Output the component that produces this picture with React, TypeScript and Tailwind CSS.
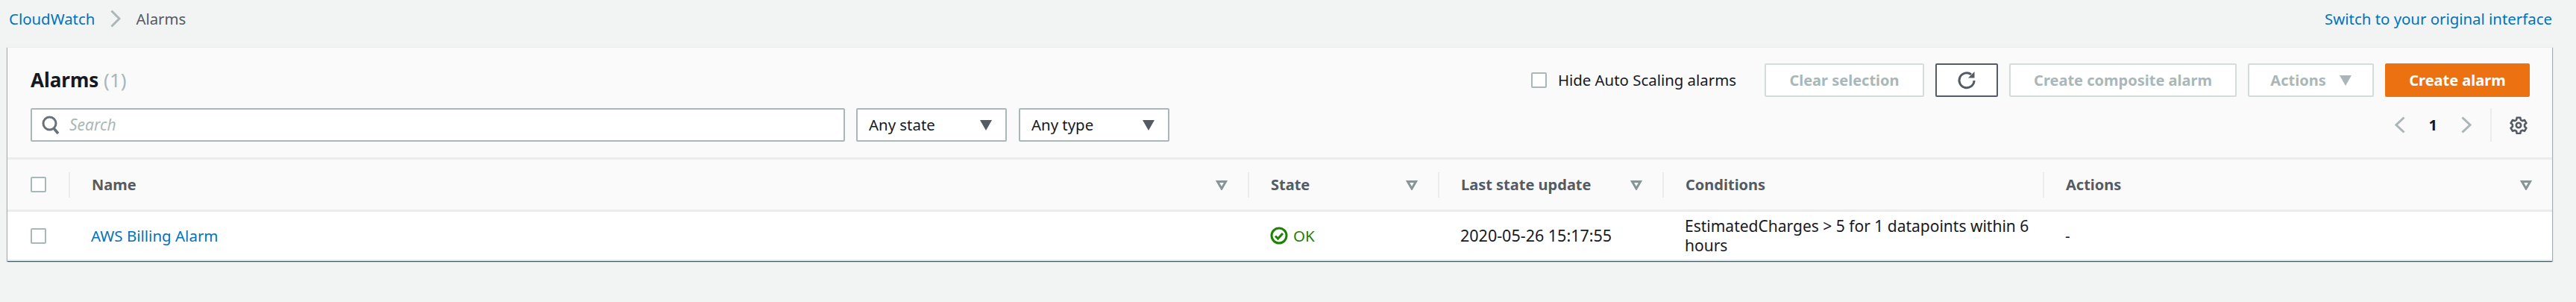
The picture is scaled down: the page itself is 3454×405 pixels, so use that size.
const font = "font-['Noto_Sans',sans-serif]"

function Checkbox() {
  return <div className="h-[21px] w-[21px] shrink-0 rounded-[2px] border-2 border-[#aab7b8] bg-white" />
}

function SortIcon() {
  return (
    <svg width="16" height="14" viewBox="0 0 16 14" className="shrink-0">
      <path d="M2.5 2.5H13.5L8 12Z" fill="none" stroke="#879596" strokeWidth="3" strokeLinejoin="miter" />
    </svg>
  )
}

function CaretDown({ color }: { color: string }) {
  return (
    <svg width="16" height="14" viewBox="0 0 16 14" className="shrink-0">
      <path d="M0 0H16L8 14Z" fill={color} />
    </svg>
  )
}

function Chevron({ left, className }: { left?: boolean; className?: string }) {
  return (
    <svg width="14" height="23" viewBox="0 0 14 23" className={className}>
      <path d={left ? "M12.5 1.5L2 11.5L12.5 21.5" : "M1.5 1.5L12 11.5L1.5 21.5"} fill="none" stroke="#aab7b8" strokeWidth="3" />
    </svg>
  )
}

function FilterSelect({ label }: { label: string }) {
  return (
    <div className="flex h-[45px] w-[202px] items-center justify-between rounded-[2px] border-2 border-[#aab7b8] bg-white pl-[15px] pr-[18px] text-[20.4px] text-[#16191f]">
      <span>{label}</span>
      <CaretDown color="#545b64" />
    </div>
  )
}

function DisabledButton({ children, width }: { children: React.ReactNode; width: string }) {
  return (
    <div className={`flex h-[45px] ${width} items-center justify-center rounded-[2px] border-2 border-[#d5dbdb] bg-white text-[20px] font-bold text-[#aab7b8]`}>
      {children}
    </div>
  )
}

function HeaderCell({ label, width, sort = true }: { label: string; width: string; sort?: boolean }) {
  return (
    <div className={`flex h-[34px] ${width} items-center justify-between border-l-2 border-[#eaeded] pl-[29px] pr-[27px]`}>
      <span className="text-[20px] font-bold text-[#545b64]">{label}</span>
      {sort && <SortIcon />}
    </div>
  )
}

export default function App() {
  return (
    <div className={`h-[405px] w-[3454px] overflow-hidden bg-[#f2f3f3] ${font}`}>
      <div className="flex h-[63px] items-center justify-between pb-[13px] pl-[12px] pr-[32px] text-[20.4px]">
        <div className="flex items-center">
          <span className="text-[#0073bb]">CloudWatch</span>
          <svg width="14" height="24" viewBox="0 0 14 24" className="ml-[21px] mr-[20px]">
            <path d="M1.5 1.5L12 12L1.5 22.5" fill="none" stroke="#aab7b8" strokeWidth="3" />
          </svg>
          <span className="text-[#545b64]">Alarms</span>
        </div>
        <span className="text-[#0073bb]">Switch to your original interface</span>
      </div>

      <div className="ml-[10px] w-[3412px] border-t border-[#eaeded] bg-white shadow-[0_1px_1px_0_rgba(0,28,36,0.5),1px_1px_1px_0_rgba(0,28,36,0.25),-1px_1px_1px_0_rgba(0,28,36,0.25)]">
        <div className="border-b-[3px] border-[#eaeded] bg-[#fafafa] pb-[21px] pl-[31px] pr-[30px] pt-[21px]">
          <div className="flex h-[45px] items-center">
            <h1 className="text-[26px] font-bold text-[#16191f]">
              Alarms <span className="font-normal text-[#aab7b8]">(1)</span>
            </h1>
            <label className="ml-auto flex items-center gap-[15px] text-[20.4px] text-[#16191f]">
              <Checkbox />
              Hide Auto Scaling alarms
            </label>
            <div className="ml-[38px] flex gap-[15px]">
              <DisabledButton width="w-[214px]">Clear selection</DisabledButton>
              <div className="flex h-[45px] w-[84px] items-center justify-center rounded-[2px] border-2 border-[#545b64] bg-white">
                <svg width="26" height="26" viewBox="0 0 26 26">
                  <path d="M19 4.8A10 10 0 1 0 23 13" fill="none" stroke="#545b64" strokeWidth="3" />
                  <path d="M23.5 1V9.5H15Z" fill="#545b64" />
                </svg>
              </div>
              <DisabledButton width="w-[305px]">Create composite alarm</DisabledButton>
              <DisabledButton width="w-[169px]">
                <span className="mr-[18px]">Actions</span>
                <CaretDown color="#aab7b8" />
              </DisabledButton>
              <div className="flex h-[45px] w-[194px] items-center justify-center rounded-[2px] bg-[#ec7211] text-[20px] font-bold text-white">
                Create alarm
              </div>
            </div>
          </div>

          <div className="mt-[15px] flex h-[45px] items-center">
            <div className="flex h-[45px] w-[1092px] items-center rounded-[2px] border-2 border-[#aab7b8] bg-white pl-[13px]">
              <svg width="24" height="26" viewBox="0 0 24 26">
                <circle cx="10.5" cy="10.5" r="8.5" fill="none" stroke="#687078" strokeWidth="3" />
                <path d="M16 17L22 24" stroke="#687078" strokeWidth="3.5" />
              </svg>
              <span className="ml-[13px] text-[21px] italic text-[#aab7b8]">Search</span>
            </div>
            <div className="ml-[15px] flex gap-[16px]">
              <FilterSelect label="Any state" />
              <FilterSelect label="Any type" />
            </div>
            <div className="ml-auto flex h-[45px] items-center">
              <Chevron left />
              <span className="ml-[32px] mr-[32px] text-[20px] font-bold text-[#16191f]">1</span>
              <Chevron />
              <div className="ml-[25px] h-[45px] w-[2px] bg-[#eaeded]" />
              <svg width="24" height="24" viewBox="0 0 24 24" className="ml-[24px] mr-[3px]" fill="none" stroke="#545b64" strokeWidth="2.6" strokeLinejoin="round">
                <path d="M9.7 1.8h4.6l.6 3 2.3 1.3 2.9-1 2.3 4-2.3 2v2.6l2.3 2-2.3 4-2.9-1-2.3 1.3-.6 3H9.7l-.6-3-2.3-1.3-2.9 1-2.3-4 2.3-2v-2.6l-2.3-2 2.3-4 2.9 1 2.3-1.3z" />
                <circle cx="12" cy="12" r="3.2" />
              </svg>
            </div>
          </div>
        </div>

        <div className="flex h-[70px] items-center border-b-[3px] border-[#eaeded] bg-[#fafafa]">
          <div className="flex w-[82px] shrink-0 pl-[31px]">
            <Checkbox />
          </div>
          <HeaderCell label="Name" width="w-[1581px]" />
          <HeaderCell label="State" width="w-[255px]" />
          <HeaderCell label="Last state update" width="w-[301px]" />
          <HeaderCell label="Conditions" width="w-[510px]" sort={false} />
          <HeaderCell label="Actions" width="w-[683px]" />
        </div>

        <div className="flex h-[66px] items-center border-b-2 border-[#eaeded] text-[20.5px] text-[#16191f]">
          <div className="flex w-[82px] shrink-0 pl-[31px]">
            <Checkbox />
          </div>
          <div className="w-[1581px] pl-[30px] text-[#0073bb]">AWS Billing Alarm</div>
          <div className="flex w-[255px] items-center gap-[7px] pl-[30px] text-[#1d8102]">
            <svg width="24" height="24" viewBox="0 0 24 24" className="shrink-0">
              <circle cx="12" cy="12" r="10" fill="none" stroke="#1d8102" strokeWidth="3" />
              <path d="M7 12.5L10.5 16L17 9" fill="none" stroke="#1d8102" strokeWidth="3" />
            </svg>
            OK
          </div>
          <div className="w-[301px] pl-[30px] text-[21.5px]">2020-05-26 15:17:55</div>
          <div className="w-[510px] pl-[30px] pr-[4px] text-[21px] leading-[26px]">EstimatedCharges &gt; 5 for 1 datapoints within 6 hours</div>
          <div className="w-[683px] pl-[30px]">-</div>
        </div>
      </div>
    </div>
  )
}
